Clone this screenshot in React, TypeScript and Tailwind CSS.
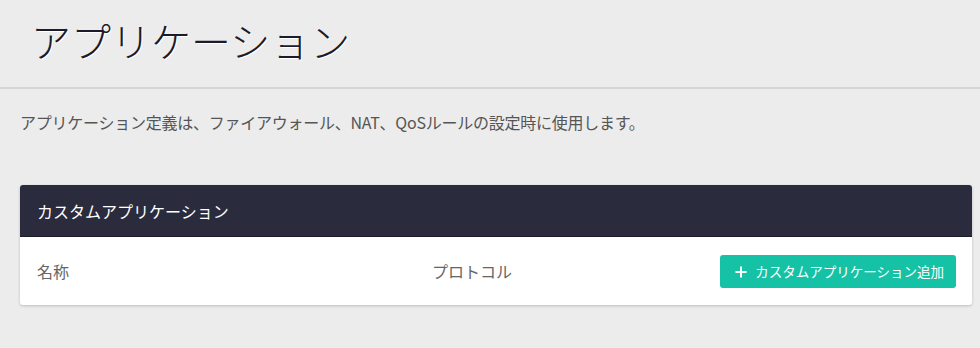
export default function App() {
  const font = { fontFamily: '"Noto Sans CJK JP", "Noto Sans", sans-serif' }
  return (
    <div className="min-h-[348px] w-full bg-[#ececec]" style={font}>
      {/* Page title */}
      <div className="h-[89px] border-b-2 border-[#d6d6d6] pl-[31px] pt-[12px]">
        <h1 className="text-[40px] font-light leading-[56px] text-[#1b1b2b] [text-shadow:1px_1px_0_#ffffff]">
          アプリケーション
        </h1>
      </div>

      <p className="pl-5 pt-[22px] text-[16px] leading-[22px] tracking-[-0.25px] text-[#555555]">
        アプリケーション定義は、ファイアウォール、NAT、QoSルールの設定時に使用します。
      </p>

      {/* Custom applications card */}
      <div className="ml-5 mr-[8px] mt-[52px] overflow-hidden rounded-[3px] bg-white shadow-[0_1px_3px_rgba(0,0,0,0.2)]">
        <div className="flex h-[52px] items-center border-b border-[#1c1d2a] bg-[#2a2b3d] px-[17px]">
          <span className="text-[16px] text-white">カスタムアプリケーション</span>
        </div>
        <div className="flex h-[68px] items-center px-[17px] text-[16px] text-[#666666]">
          <span className="w-[395px]">名称</span>
          <span className="flex-1">プロトコル</span>
          <button className="mr-[-1px] flex h-[33px] items-center gap-[8px] rounded-[3px] bg-[#16c2a5] pl-[15px] pr-[12px] text-[13.5px] text-white">
            <svg width="12" height="12" viewBox="0 0 12 12" className="mt-[1px]">
              <path d="M6 0.5v11M0.5 6h11" stroke="white" strokeWidth="2" />
            </svg>
            カスタムアプリケーション追加
          </button>
        </div>
      </div>
    </div>
  )
}
